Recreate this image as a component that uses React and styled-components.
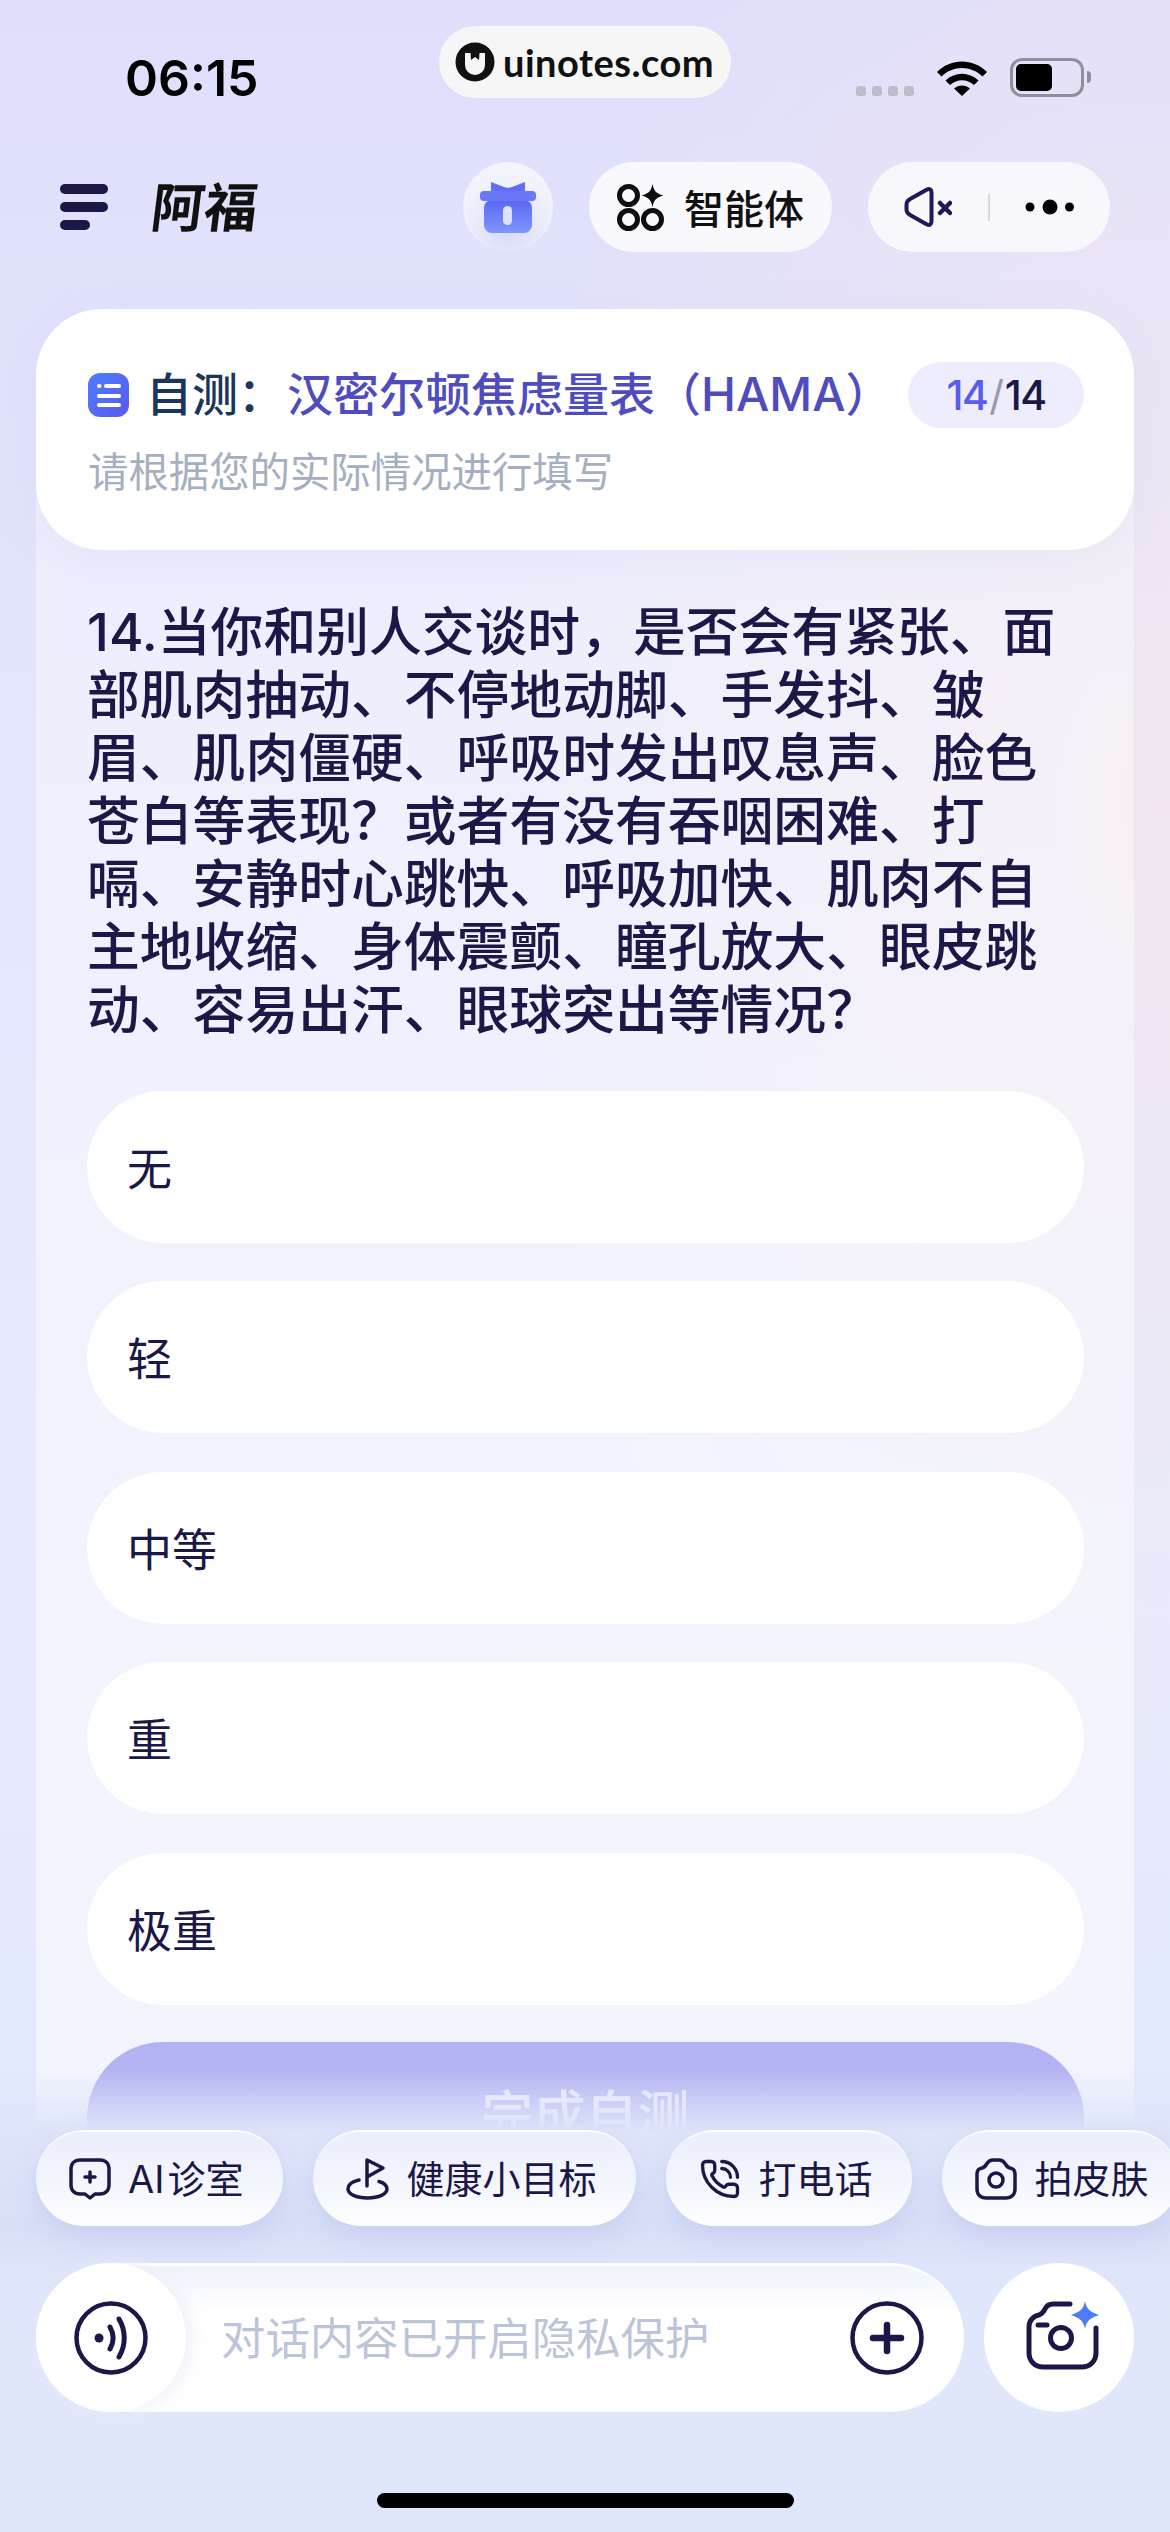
import React from 'react';
import styled, { createGlobalStyle } from 'styled-components';
import { PhoneCall } from 'lucide-react';

const CJK = '"Noto Sans CJK SC", sans-serif';
const LATIN_CJK = 'Inter, "Noto Sans CJK SC", sans-serif';
const INK = '#1b1848';

const GlobalStyle = createGlobalStyle`
  html, body {
    margin: 0;
    padding: 0;
  }
  body {
    font-family: ${LATIN_CJK};
    color: ${INK};
  }
`;

const Page = styled.div`
  position: relative;
  width: 1170px;
  height: 2532px;
  overflow: hidden;
  background:
    radial-gradient(700px 1100px at 100% 32%, rgba(250, 232, 234, 0.65), rgba(250, 232, 234, 0) 100%),
    linear-gradient(180deg, #dfdffb 0%, #e3e6fd 30%, #e6ebfe 60%, #e1e7fb 100%);
`;

const StatusBar = styled.div`
  display: grid;
  grid-template-columns: 439px 292px 1fr;
  height: 162px;
`;

const Time = styled.div`
  padding: 50px 0 0 125px;
  font: 600 50px/56px Inter, sans-serif;
  letter-spacing: 0;
  color: #000;
`;

const WatermarkPill = styled.div`
  display: flex;
  align-items: center;
  gap: 8px;
  height: 72px;
  margin-top: 26px;
  padding-left: 16px;
  border-radius: 36px;
  background: #f6f6f6;
  font: 700 38px/72px Lato, sans-serif;
  color: #111;
  letter-spacing: 0.5px;
`;

const StatusIcons = styled.div`
  display: flex;
  align-items: flex-start;
  padding: 58px 0 0 125px;
`;

const SignalDots = styled.div`
  display: flex;
  gap: 6px;
  margin: 28px 22px 0 0;
`;

const SignalDot = styled.span`
  width: 10px;
  height: 10px;
  border-radius: 3px;
  background: #bdbdcc;
`;

const Battery = styled.div`
  display: flex;
  box-sizing: border-box;
  width: 74px;
  height: 39px;
  margin-left: 22px;
  padding: 3px;
  border: 3px solid #8f8f9b;
  border-radius: 12px;
`;

const BatteryFill = styled.span`
  width: 36px;
  height: 27px;
  border-radius: 5px;
  background: #000;
`;

const BatteryNub = styled.span`
  width: 4px;
  height: 12px;
  margin: 13px 0 0 3px;
  border-radius: 0 4px 4px 0;
  background: #8f8f9b;
`;

const Header = styled.div`
  display: flex;
  align-items: center;
  justify-content: space-between;
  height: 90px;
  margin-bottom: 57px;
  padding: 0 60px;
`;

const Brand = styled.div`
  display: flex;
  align-items: center;
  gap: 44px;
`;

const BrandName = styled.div`
  margin-bottom: 5px;
  font: 700 53px/53px ${CJK};
  color: #111;
  transform: skewX(-7deg);
`;

const HeaderActions = styled.div`
  display: flex;
  align-items: center;
  gap: 36px;
`;

const GiftButton = styled.div`
  display: flex;
  align-items: center;
  justify-content: center;
  width: 90px;
  height: 90px;
  border-radius: 50%;
  background: radial-gradient(circle at 50% 75%, #d7dafb 0%, #f2f2fd 60%, #f7f7fe 100%);
`;

const AgentButton = styled.div`
  display: flex;
  align-items: center;
  gap: 20px;
  width: 243px;
  height: 90px;
  box-sizing: border-box;
  padding-left: 28px;
  border-radius: 45px;
  background: #f8f8fd;
  font: 500 40px/90px ${CJK};
  color: #111;
`;

const CapsuleButton = styled.div`
  display: flex;
  align-items: center;
  width: 242px;
  height: 90px;
  box-sizing: border-box;
  padding-left: 36px;
  border-radius: 45px;
  background: #f8f7fb;
`;

const CapsuleDivider = styled.span`
  width: 2px;
  height: 27px;
  margin: 0 35px 0 36px;
  background: #d9d9e2;
`;

const Panel = styled.main`
  width: 1098px;
  height: 2223px;
  margin: 0 36px;
  background: linear-gradient(
    180deg,
    rgba(255, 255, 255, 0) 130px,
    rgba(255, 255, 255, 0.38) 130px,
    rgba(255, 255, 255, 0.42) 1000px,
    rgba(255, 255, 255, 0.55) 1800px
  );
`;

const TopCard = styled.section`
  box-sizing: border-box;
  height: 241px;
  padding: 53px 50px 0 52px;
  border-radius: 66px;
  background: #fff;
  box-shadow: 0 14px 40px rgba(205, 208, 240, 0.25);
`;

const TitleRow = styled.div`
  display: flex;
  align-items: center;
  height: 66px;
`;

const TitleIcon = styled.svg`
  flex: none;
  margin-right: 17px;
`;

const Title = styled.div`
  flex: 1;
  margin-top: -5px;
  font: 500 46px/66px ${CJK};
  color: #1c3558;
  white-space: nowrap;
`;

const ScaleName = styled.span`
  margin-left: 3px;
  color: #4f4cc0;
`;

const ScaleCode = styled.span`
  font-family: Inter, sans-serif;
  font-weight: 500;
  font-size: 47px;
`;

const ProgressPill = styled.div`
  display: flex;
  align-items: center;
  justify-content: center;
  width: 176px;
  height: 66px;
  border-radius: 33px;
  background: #eeedfd;
  font: 500 41px/66px Inter, sans-serif;
  letter-spacing: -1.5px;
`;

const ProgressCount = styled.span`
  color: ${(p) => p.$color};
  font-weight: ${(p) => p.$weight || 500};
  margin: 0 ${(p) => p.$space || 0}px;
`;

const Subtitle = styled.div`
  margin-top: 14px;
  font: 400 40.4px/56px ${CJK};
  color: #a5afc0;
`;

const Body = styled.div`
  padding: 51px 50px 0 51px;
`;

const Question = styled.h1`
  margin: 0 0 49px 0;
  font: 500 52.8px/63px ${LATIN_CJK};
  color: ${INK};
`;

const QuestionLine = styled.span`
  display: block;
  white-space: nowrap;
`;

const Options = styled.div`
  display: grid;
  gap: 38.4px;
`;

const Option = styled.div`
  box-sizing: border-box;
  height: 152px;
  padding-left: 40px;
  border-radius: 76px;
  background: #fff;
  font: 400 45px/152px ${CJK};
  color: ${INK};
`;

const SubmitButton = styled.div`
  height: 152px;
  margin-top: 37px;
  border-radius: 76px;
  background: #b3b2f2;
  text-align: center;
  font: 500 52px/140px ${CJK};
  color: #eeeefc;
`;

/* sits over the end of the scroll area, the gradient hides the submit button */
const Dock = styled.div`
  position: absolute;
  left: 0;
  right: 0;
  bottom: 0;
  height: 472px;
  padding-top: 70px;
  box-sizing: border-box;
  background: linear-gradient(
    180deg,
    rgba(224, 230, 251, 0) 8px,
    rgba(222, 228, 250, 0.5) 38px,
    #dfe5fa 72px,
    #d8dff7 170px,
    #dfe5fa 210px,
    #e1e7fb 300px
  );
`;

const ChipRow = styled.div`
  display: flex;
  gap: 30px;
  padding-left: 36px;
  white-space: nowrap;
`;

const Chip = styled.div`
  flex: none;
  display: flex;
  align-items: center;
  gap: 17px;
  height: 96px;
  box-sizing: border-box;
  padding: 0 40px 0 33px;
  border-radius: 48px;
  background: linear-gradient(180deg, #ebeefc 0%, #f4f6fe 55%, #ffffff 100%);
  border-top: 2px solid rgba(255, 255, 255, 0.8);
  box-shadow: 0 10px 26px rgba(160, 172, 226, 0.3);
  font: 400 38px/96px ${LATIN_CJK};
  color: ${INK};

  &:last-child {
    padding-right: 30px;
  }
`;

const ChipLabel = styled.span`
  display: block;
`;

const ChipLatin = styled.span`
  margin-right: 3px;
`;

const InputRow = styled.div`
  display: flex;
  gap: 20px;
  margin: 37px 36px 0;
`;

const InputBar = styled.div`
  display: flex;
  align-items: center;
  flex: 1;
  height: 149px;
  padding: 0 40px 3px 0;
  border-radius: 75px;
  background: linear-gradient(180deg, #eff2fd 0, #ffffff 45px);
  border-top: 3px solid rgba(255, 255, 255, 0.9);
  box-sizing: border-box;
`;

const VoiceButton = styled.div`
  flex: none;
  display: flex;
  align-items: center;
  justify-content: center;
  width: 150px;
  height: 149px;
  margin-bottom: -3px;
  margin-top: -3px;
  border-radius: 50%;
  background: #fff;
  box-shadow: 8px 0 16px rgba(235, 238, 250, 0.7);
`;

const Placeholder = styled.div`
  flex: 1;
  padding: 0 0 3px 35px;
  font: 400 44.4px/60px ${CJK};
  color: #bcc5d8;
`;

const CameraButton = styled.div`
  flex: none;
  display: flex;
  align-items: center;
  justify-content: center;
  width: 150px;
  height: 149px;
  padding: 0 0 3px 8px;
  box-sizing: border-box;
  border-radius: 50%;
  background: #fff;
`;

const HomeBar = styled.div`
  width: 417px;
  height: 15px;
  margin: 81px auto 0;
  border-radius: 8px;
  background: #000;
`;

const questionLines = [
  '14.当你和别人交谈时，是否会有紧张、面',
  '部肌肉抽动、不停地动脚、手发抖、皱',
  '眉、肌肉僵硬、呼吸时发出叹息声、脸色',
  '苍白等表现？或者有没有吞咽困难、打',
  '嗝、安静时心跳快、呼吸加快、肌肉不自',
  '主地收缩、身体震颤、瞳孔放大、眼皮跳',
  '动、容易出汗、眼球突出等情况？',
];

const options = ['无', '轻', '中等', '重', '极重'];

function UinotesLogo() {
  return (
    <svg width="40" height="40" viewBox="0 0 40 40">
      <circle cx="20" cy="20" r="19.5" fill="#111" />
      <path d="M10 11h5.5l.5 7 4-3 4 3 .5-7H30v12a10 10 0 0 1-20 0z" fill="#f6f6f6" />
    </svg>
  );
}

function WifiIcon() {
  return (
    <svg width="52" height="38" viewBox="0 0 52 38">
      <path d="M1 14C15 0 37 0 51 14l-4.5 4.5C35 7 17 7 5.500 18.500z" fill="#000" />
      <path d="M9.500 22.500C19 13.500 33 13.500 42.500 22.500L38 27C31 20.500 21 20.500 14 27z" fill="#000" />
      <path d="M18 30.500c5-4 11-4 16 0L26 38z" fill="#000" />
    </svg>
  );
}

function MenuIcon() {
  return (
    <svg width="48" height="46" viewBox="0 0 48 46" fill="#1b1848">
      <rect x="0" y="0" width="48" height="10" rx="5" />
      <rect x="0" y="18" width="48" height="10" rx="5" />
      <rect x="0" y="36" width="30" height="10" rx="5" />
    </svg>
  );
}

function GiftIcon() {
  return (
    <svg width="56" height="52" viewBox="0 0 56 52">
      <defs>
        <linearGradient id="giftBody" x1="0" y1="0" x2="0" y2="1">
          <stop offset="0" stopColor="#5a66f6" />
          <stop offset="1" stopColor="#7f97fb" />
        </linearGradient>
      </defs>
      <path d="M11 1l13 5c2 1 6 1 8 0L45 1v11H11z" fill="#5f6ef5" />
      <rect x="4" y="19" width="48" height="33" rx="8" fill="url(#giftBody)" />
      <rect x="0" y="10" width="56" height="10" rx="4" fill="#6a78f8" />
      <rect x="23" y="25" width="9" height="19" rx="4.500" fill="#dfe3fe" />
    </svg>
  );
}

function AgentIcon() {
  return (
    <svg width="47" height="47" viewBox="0 0 47 47" fill="none" stroke="#0d0d12" strokeWidth="5">
      <circle cx="11.500" cy="11.500" r="9" />
      <circle cx="11.500" cy="35.500" r="9" />
      <circle cx="35.500" cy="35.500" r="9" />
      <path d="M35.500 0c1.500 7 3.500 9.500 11 11.500-7.500 2-9.500 4.500-11 11.500-1.500-7-3.500-9.500-11-11.500 7.500-2 9.500-4.500 11-11.500z" fill="#0d0d12" stroke="none" />
    </svg>
  );
}

function MuteIcon() {
  return (
    <svg width="48" height="40" viewBox="0 0 48 40" fill="none" stroke="#1d1a55">
      <path d="M7 11.500l16-9c2.500-1 4.500 0 4.500 3v29c0 3-2 4-4.500 3l-16-9c-3-1.500-4.500-3-4.500-6v-5c0-3 1.500-4.500 4.500-6z" strokeWidth="4" strokeLinejoin="round" />
      <path d="M36 16l10 10M46 16L36 26" strokeWidth="4.500" strokeLinecap="round" />
    </svg>
  );
}

function MoreIcon() {
  return (
    <svg width="50" height="16" viewBox="0 0 50 16" fill="#000">
      <circle cx="5" cy="8" r="4.500" />
      <circle cx="25" cy="8" r="7.500" />
      <circle cx="44.500" cy="8" r="4.500" />
    </svg>
  );
}

function ListBadgeIcon() {
  return (
    <TitleIcon width="41" height="44" viewBox="0 0 41 44">
      <defs>
        <linearGradient id="badgeFill" x1="0" y1="0" x2="1" y2="1">
          <stop offset="0" stopColor="#4c80ff" />
          <stop offset="1" stopColor="#5b57ee" />
        </linearGradient>
      </defs>
      <rect width="41" height="44" rx="12" fill="url(#badgeFill)" />
      <g stroke="#fff" strokeWidth="4" strokeLinecap="round">
        <path d="M11 13h.5M18 13h13M11 23h20M11 32h20" />
      </g>
    </TitleIcon>
  );
}

function ClinicIcon() {
  return (
    <svg width="42" height="42" viewBox="0 0 42 42" fill="none" stroke="#1b1848" strokeWidth="3.500" strokeLinejoin="round">
      <path d="M11 2h20c5.500 0 9 3.500 9 9v16c0 5.500-3.500 9-9 9h-5l-5 4-5-4h-5c-5.500 0-9-3.500-9-9V11c0-5.500 3.500-9 9-9z" />
      <path d="M21 14v10M16 19h10" strokeLinecap="round" />
    </svg>
  );
}

function GoalIcon() {
  return (
    <svg width="43" height="42" viewBox="0 0 43 42" fill="none" stroke="#1b1848" strokeWidth="3.500" strokeLinecap="round" strokeLinejoin="round">
      <path d="M21 28V2l16 8-16 9" />
      <path d="M13 22C6 23.500 2 27 2 31c0 5 8 9 19.500 9S41 36 41 31c0-3.500-3-6-8-7.500" />
    </svg>
  );
}

function SkinCameraIcon() {
  return (
    <svg width="42" height="42" viewBox="0 0 42 42" fill="none" stroke="#1b1848" strokeWidth="3.500">
      <path d="M2 16c0-3.500 2-5.500 5-6 2.500-.5 3.500-2 5-4.500C13.500 3 15.500 2 18 2h6c2.500 0 4.500 1 6 3.500 1.500 2.500 2.500 4 5 4.500 3 .5 5 2.500 5 6v15c0 5.500-3.500 9-9 9H11c-5.500 0-9-3.500-9-9z" strokeLinejoin="round" />
      <circle cx="21" cy="22" r="7" />
    </svg>
  );
}

function VoiceIcon() {
  return (
    <svg width="74" height="74" viewBox="0 0 74 74" fill="none" stroke="#1b1848">
      <circle cx="37" cy="37" r="34.500" strokeWidth="4.500" />
      <circle cx="25" cy="37" r="4.500" fill="#1b1848" stroke="none" />
      <path d="M36 26c4 7 4 15 0 22" strokeWidth="5" strokeLinecap="round" />
      <path d="M45 18c7 12 7 26 0 38" strokeWidth="5" strokeLinecap="round" />
    </svg>
  );
}

function PlusCircleIcon() {
  return (
    <svg width="74" height="74" viewBox="0 0 74 74" fill="none" stroke="#1b1848">
      <circle cx="37" cy="37" r="34.500" strokeWidth="4.500" />
      <path d="M37 24v26M23 37h28" strokeWidth="6.500" strokeLinecap="round" />
    </svg>
  );
}

function SparkCameraIcon() {
  return (
    <svg width="74" height="70" viewBox="0 0 74 70" fill="none" stroke="#1b1848" strokeWidth="5" strokeLinecap="round">
      <path d="M70 27v25c0 8-6 14-14 14H17C9 66 3 60 3 52V26c0-6 4-11 10-12 3-1 4-2 6-6 2-4 5-5 8-5h17" />
      <path d="M12 24h9" />
      <circle cx="35" cy="37" r="10.500" />
      <path d="M59 0c1.500 7.500 4.500 11 14 14-9.500 3-12.500 6.500-14 14-1.500-7.500-4.500-11-14-14 9.500-3 12.500-6.500 14-14z" fill="#4f7bfb" stroke="none" />
    </svg>
  );
}

export default function App() {
  return (
    <Page>
      <GlobalStyle />

      <StatusBar>
        <Time>06:15</Time>
        <WatermarkPill>
          <UinotesLogo />
          uinotes.com
        </WatermarkPill>
        <StatusIcons>
          <SignalDots>
            <SignalDot />
            <SignalDot />
            <SignalDot />
            <SignalDot />
          </SignalDots>
          <WifiIcon />
          <Battery>
            <BatteryFill />
          </Battery>
          <BatteryNub />
        </StatusIcons>
      </StatusBar>

      <Header>
        <Brand>
          <MenuIcon />
          <BrandName>阿福</BrandName>
        </Brand>
        <HeaderActions>
          <GiftButton>
            <GiftIcon />
          </GiftButton>
          <AgentButton>
            <AgentIcon />
            智能体
          </AgentButton>
          <CapsuleButton>
            <MuteIcon />
            <CapsuleDivider />
            <MoreIcon />
          </CapsuleButton>
        </HeaderActions>
      </Header>

      <Panel>
        <TopCard>
          <TitleRow>
            <ListBadgeIcon />
            <Title>
              自测：<ScaleName>汉密尔顿焦虑量表（<ScaleCode>HAMA</ScaleCode>）</ScaleName>
            </Title>
            <ProgressPill>
              <ProgressCount $color="#5a5cf0">14</ProgressCount>
              <ProgressCount $color="#9a9aa8" $weight={400} $space={2}>/</ProgressCount>
              <ProgressCount $color="#1b1848">14</ProgressCount>
            </ProgressPill>
          </TitleRow>
          <Subtitle>请根据您的实际情况进行填写</Subtitle>
        </TopCard>

        <Body>
          <Question>
            {questionLines.map((line) => (
              <QuestionLine key={line}>{line}</QuestionLine>
            ))}
          </Question>
          <Options>
            {options.map((label) => (
              <Option key={label}>{label}</Option>
            ))}
          </Options>
          <SubmitButton>完成自测</SubmitButton>
        </Body>
      </Panel>

      <Dock>
        <ChipRow>
          <Chip><ClinicIcon /><ChipLabel><ChipLatin>AI</ChipLatin>诊室</ChipLabel></Chip>
          <Chip><GoalIcon />健康小目标</Chip>
          <Chip><PhoneCall size={42} strokeWidth={1.900} color={INK} />打电话</Chip>
          <Chip><SkinCameraIcon />拍皮肤</Chip>
        </ChipRow>
        <InputRow>
          <InputBar>
            <VoiceButton>
              <VoiceIcon />
            </VoiceButton>
            <Placeholder>对话内容已开启隐私保护</Placeholder>
            <PlusCircleIcon />
          </InputBar>
          <CameraButton>
            <SparkCameraIcon />
          </CameraButton>
        </InputRow>
        <HomeBar />
      </Dock>
    </Page>
  );
}
